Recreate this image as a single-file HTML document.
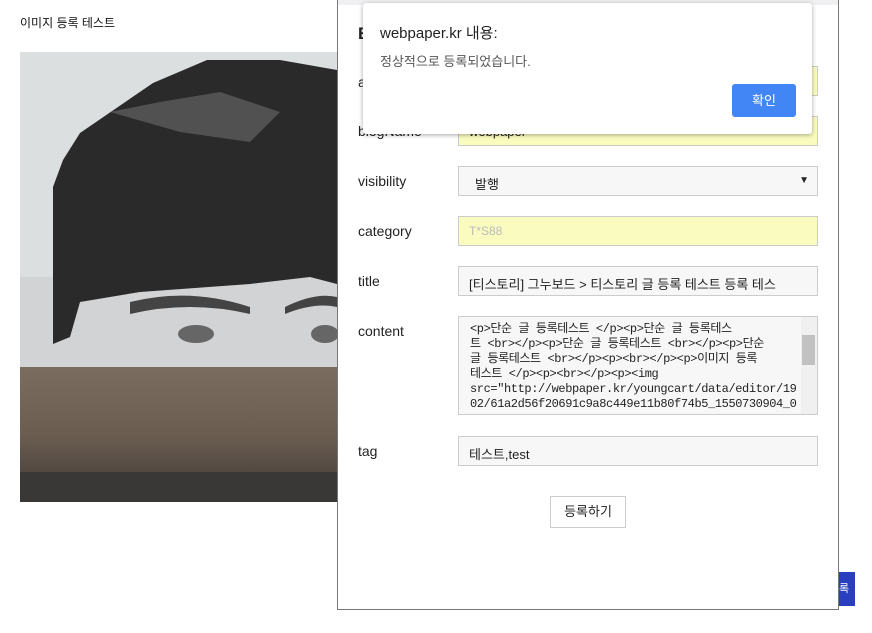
<!DOCTYPE html>
<html><head><meta charset="utf-8"><style>
*{box-sizing:border-box;margin:0;padding:0}
body{width:872px;height:633px;overflow:hidden;background:#fff;font-family:"Liberation Sans","Noto Sans CJK KR",sans-serif;position:relative;color:#222}
.abs{position:absolute}
.lbl{position:absolute;left:358px;font-size:14px;color:#222}
.inp{position:absolute;left:458px;width:360px;height:30px;border:1px solid #ccc;background:#f7f7f7;font-size:13px;padding:7px 10px;color:#222;white-space:nowrap;overflow:hidden}
.yel{background:#fafcbf}
</style></head><body>
<div class="abs" style="left:20px;top:14px;font-size:12px;color:#111">이미지 등록 테스트</div>
<svg class="abs" style="left:20px;top:52px" width="317" height="450" viewBox="0 0 317 450">
<defs><linearGradient id="g" x1="0" y1="0" x2="0" y2="1"><stop offset="0" stop-color="#7a6c5e"/><stop offset=".5" stop-color="#6b5d50"/><stop offset="1" stop-color="#3f3a36"/></linearGradient></defs>
<rect width="317" height="450" fill="#dcdfe0"/>
<rect y="225" width="317" height="95" fill="#d2d3d4"/>
<path d="M33,135 L43,108 L60,81 L133,31 L187,8 L260,8 L317,18 L317,232 L290,225 L230,232 L120,240 L60,250 L50,285 L33,292 Z" fill="#2a2a2a"/>
<path d="M90,60 L140,50 L200,40 L260,60 L230,90 L160,80 Z" fill="#6d6d6d" opacity=".6"/>
<path d="M110,250 Q170,235 230,255 L230,262 Q170,248 110,262 Z" fill="#444"/>
<path d="M265,255 Q295,240 317,245 L317,255 Q295,250 265,262 Z" fill="#444"/>
<ellipse cx="176" cy="282" rx="18" ry="9" fill="#666"/>
<ellipse cx="305" cy="282" rx="14" ry="9" fill="#666"/>
<rect y="315" width="317" height="135" fill="url(#g)"/>
<rect y="420" width="317" height="30" fill="#3a3836"/>
</svg>
<div class="abs" style="left:337px;top:0;width:502px;height:610px;border:1px solid #777;border-top:none;background:#fff"></div>
<div class="abs" style="left:338px;top:0;width:500px;height:5px;background:#f0f0f2"></div>
<div class="abs" style="left:358px;top:24px;font-size:17px;font-weight:bold">B</div>
<div class="lbl" style="top:74px">a</div>
<div class="lbl" style="top:123px">blogName</div>
<div class="inp yel" style="top:116px">webpaper</div>
<div class="inp yel" style="top:66px"></div>
<div class="lbl" style="top:173px">visibility</div>
<div class="inp" style="top:166px;padding-left:16px">발행<span style="position:absolute;right:8px;top:8px;font-size:10px">▼</span></div>
<div class="lbl" style="top:223px">category</div>
<div class="inp yel" style="top:216px;color:#bbb;font-size:12px">T*S88</div>
<div class="lbl" style="top:273px">title</div>
<div class="inp" style="top:266px">[티스토리] 그누보드 &gt; 티스토리 글 등록 테스트 등록 테스</div>
<div class="lbl" style="top:323px">content</div>
<div class="inp" style="top:316px;height:99px;padding:5px 22px 0 11px;white-space:nowrap;font-family:'Liberation Mono','Noto Sans CJK KR',monospace;font-size:12px;line-height:15px;letter-spacing:-0.4px">&lt;p&gt;단순 글 등록테스트 &lt;/p&gt;&lt;p&gt;단순 글 등록테스<br>트 &lt;br&gt;&lt;/p&gt;&lt;p&gt;단순 글 등록테스트 &lt;br&gt;&lt;/p&gt;&lt;p&gt;단순<br>글 등록테스트 &lt;br&gt;&lt;/p&gt;&lt;p&gt;&lt;br&gt;&lt;/p&gt;&lt;p&gt;이미지 등록<br>테스트 &lt;/p&gt;&lt;p&gt;&lt;br&gt;&lt;/p&gt;&lt;p&gt;&lt;img<br>src="http://webpaper.kr/youngcart/data/editor/19<br>02/61a2d56f20691c9a8c449e11b80f74b5_1550730904_0
<div style="position:absolute;right:0;top:0;width:16px;height:97px;background:#f0f0f0"><div style="position:absolute;left:1px;top:18px;width:13px;height:30px;background:#c1c1c1"></div></div></div>
<div class="lbl" style="top:443px">tag</div>
<div class="inp" style="top:436px">테스트,test</div>
<div class="abs" style="left:550px;top:496px;width:76px;height:32px;border:1px solid #ccc;font-size:13px;text-align:center;line-height:30px">등록하기</div>
<div class="abs" style="left:839px;top:572px;width:16px;height:34px;background:#2a3fc0;color:#fff;font-size:11px;line-height:34px">록</div>
<div class="abs" style="left:363px;top:3px;width:449px;height:131px;background:#fff;border-radius:3px;box-shadow:0 1px 5px rgba(0,0,0,.35)">
<div class="abs" style="left:17px;top:19px;font-size:15px;color:#222">webpaper.kr 내용:</div>
<div class="abs" style="left:17px;top:48px;font-size:13px;color:#555">정상적으로 등록되었습니다.</div>
<div class="abs" style="left:369px;top:81px;width:64px;height:33px;background:#4285f4;border-radius:3px;color:#fff;font-size:13px;text-align:center;line-height:33px">확인</div>
</div>
</body></html>
